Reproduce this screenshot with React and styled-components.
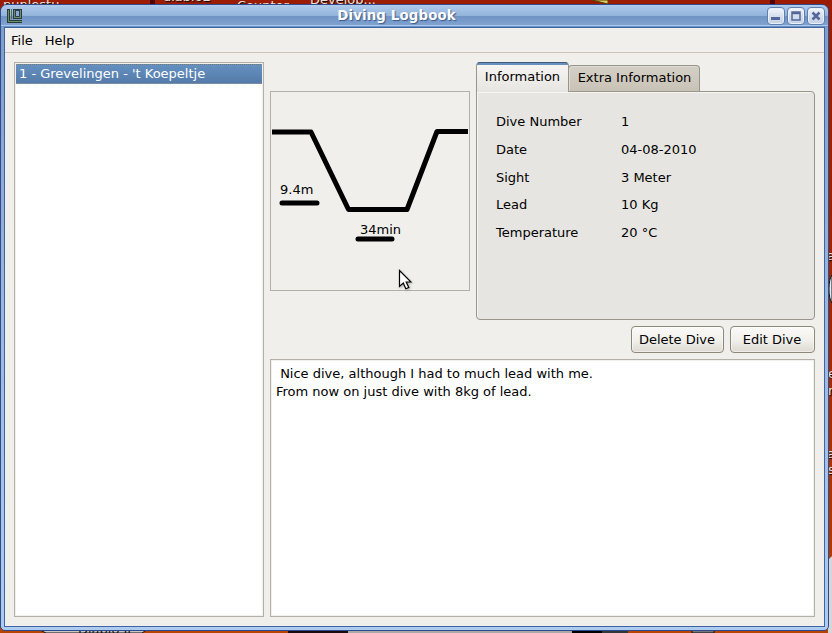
import React from "react";
import styled, { createGlobalStyle } from "styled-components";

const Global = createGlobalStyle`
  *{box-sizing:border-box}
  html,body{margin:0;padding:0}
  body{width:832px;height:633px;overflow:hidden;font-family:"DejaVu Sans",sans-serif;font-size:13px;color:#000;cursor:default}
`;
const Desktop = styled.div`
  position:relative;width:832px;height:633px;overflow:hidden;
  padding:4px 3px 2px 0;background:linear-gradient(#9b1c00,#a32800 55%,#b84200);
`;
const Wallpaper = styled.svg`position:absolute;left:0;top:0;`;
const DeskLabel = styled.span`
  position:absolute;left:${p => p.$x}px;top:${p => p.$y}px;font-size:13px;line-height:16px;
  white-space:nowrap;color:${p => p.$dark ? "#111" : "#e6e0dc"};text-shadow:${p => p.$dark ? "none" : "1px 1px 1px #000"};
`;
const Window = styled.div`
  position:relative;width:829px;height:627px;display:flex;flex-direction:column;
  border:1px solid #2f4b8c;border-radius:7px 7px 5px 5px;
  background:linear-gradient(#7b9dca,#9ab7de 300px,#aecbf0);
  padding:0 3px 3px;
`;
const TitleBar = styled.header`
  height:22px;flex:none;display:flex;align-items:center;margin:0 -3px;padding:0 3px 0 6px;
  border-radius:6px 6px 0 0;
  background:linear-gradient(#b3cdef 0,#a9c6e9 2px,#92b2da 11px,#6f93c2 11px,#7fa2d0 20px,#a9c8ee 20px,#a9c8ee 21px,#6d92c4 21px);
`;
const Title = styled.h1`
  flex:1;margin:0;padding:0 0 1px;text-align:center;font-size:13.330px;line-height:20px;font-weight:bold;
  letter-spacing:.15px;text-indent:3px;
  color:#fff;text-shadow:1px 1px 1px #3c5a88;
`;
const Controls = styled.div`display:flex;gap:2px;`;
const Control = styled.button`
  width:18px;height:18px;padding:0;border:1px solid #5f7fb0;border-radius:4px;display:grid;place-items:center;
  background:linear-gradient(#f4f7fb,#d6dfed 50%,#c3d0e4);box-shadow:inset 0 0 0 1px #e9f0fa;
`;
const Client = styled.main`
  flex:1;display:flex;flex-direction:column;border:1px solid #3f64a3;background:#f0efeb;
`;
const MenuBar = styled.nav`
  height:25px;flex:none;display:flex;gap:12px;padding:0 6px;align-items:center;border-bottom:1px solid #cfc3b8;
`;
const Content = styled.div`flex:1;display:flex;gap:6px;padding:9px 9px 9px;`;
const Frame = styled.section`background:#fff;border:1px solid #b2b0a9;box-shadow:inset 0 0 0 1px #f1f0ed;`;
const DiveList = styled(Frame)`width:250px;padding:1px;`;
const DiveItem = styled.div`
  height:20px;padding:0 3px;color:#fff;border:1px dotted #8b8b86;border-width:1px 0;
  background:linear-gradient(#6390c0,#557ba9);line-height:18px;
`;
const Details = styled.div`flex:1;display:flex;flex-direction:column;`;
const Summary = styled.div`display:flex;gap:6px;height:258px;`;
const Profile = styled.figure`
  position:relative;width:200px;height:200px;margin:29px 0 0;border:1px solid #b2b0a9;
`;
const ProfileLabel = styled.figcaption`
  position:absolute;left:${p => p.$x}px;top:${p => p.$y}px;line-height:16px;
`;
const Notebook = styled.div`flex:1;display:flex;flex-direction:column;`;
const Tabs = styled.div`display:flex;align-items:flex-end;height:29px;`;
const Tab = styled.button`
  font:inherit;color:#000;border:1px solid #98958a;border-radius:4px 4px 0 0;white-space:nowrap;
  width:${p => p.$active ? 93 : 132}px;height:${p => p.$active ? 30 : 26}px;
  padding:${p => p.$active ? "0 0 2px" : "0 0 2px 1px"};
  margin:${p => p.$active ? "0 0 -1px" : "0 0 0 -1px"};
  border-bottom:0;position:relative;z-index:${p => p.$active ? 1 : 0};
  background:${p => p.$active ? "linear-gradient(#6690bd 2px,#f5f4f2 2px,#e6e5e1)" : "linear-gradient(#d5d0c7,#c8c2b6)"};
  border-top-color:${p => p.$active ? "#405b78" : "#98958a"};
  box-shadow:${p => p.$active ? "none" : "inset 1px 1px #dedad2"};
`;
const Panel = styled.div`
  height:229px;padding:15px 19px;border:1px solid #98958a;border-radius:0 4px 4px 4px;background:#e6e5e1;
  box-shadow:inset 1px 1px #f6f5f3;display:grid;grid-template-columns:125px 1fr;
  grid-template-rows:28px 28px 28px 27px 28px;
  align-content:start;align-items:center;
`;
const Actions = styled.div`display:flex;justify-content:flex-end;gap:6px;padding:6px 0;height:39px;`;
const Button = styled.button`
  font:inherit;color:#000;width:${p => p.$w}px;height:27px;padding:0 1px 0 0;border:1px solid #8d8778;border-radius:4px;
  background:linear-gradient(#fbfaf8,#f0efeb 55%,#ddd9d1);box-shadow:inset 0 0 0 1px #ffffff80;
`;
const Notes = styled(Frame)`
  flex:1;padding:5px;line-height:18px;white-space:pre-wrap;
`;
const Pointer = styled.svg`position:absolute;left:398px;top:269px;filter:drop-shadow(1px 1px 1px #0004);`;

const FACTS = [
  ["Dive Number", "1"],
  ["Date", "04-08-2010"],
  ["Sight", "3 Meter"],
  ["Lead", "10 Kg"],
  ["Temperature", "20 °C"],
];

function BookIcon() {
  return (
    <svg width="16" height="16" viewBox="0 0 16 16" shapeRendering="crispEdges">
      <path d="M0 1h3v11h12v3H0z" fill="#2b3d38" />
      <path d="M1 2h1v11h13v1H1z" fill="#6f8f63" />
      <path d="M4 1h1v10H4z" fill="#4f6f56" />
      <path d="M6 1h9v10H6z" fill="#2b3d38" />
      <path d="M7 2h7v8H7z" fill="#6f8f63" />
      <path d="M8 2h5v7H8z" fill="#2b3d58" />
      <path d="M9 3h3v5H9z" fill="#8aa9d2" />
    </svg>
  );
}

export default function App() {
  return (
    <Desktop>
      <Global />
      <Wallpaper width="832" height="633">
        <path d="M150 0h5v6h-5zM770 0h5v6h-5z" fill="#500006" />
        <path d="M592 0h16v4z" fill="#e0cf60" stroke="#54400a" />
        <path d="M38 629h110l-6 4H46z" fill="#c9c9ca" stroke="#111" />
        <path d="M288 629h60v4h-60z" fill="#1a0a10" />
        <path d="M348 629h226v4H348z" fill="#a9a9aa" />
        <path d="M572 629h30v4h-30z" fill="#000" />
        <path d="M602 629h26v4h-26z" fill="#32383a" />
        <path d="M692 629h22v4h-22z" fill="#777" stroke="#111" />
        <path d="M832 556l-4 4v73h4z" fill="#d6d5d8" />
        <path d="M832 275c-4 4-4 24 0 28z" fill="#e8e8ee" stroke="#111" />
      </Wallpaper>
      <DeskLabel $x={3} $y={-3}>nunlestu</DeskLabel>
      <DeskLabel $x={163} $y={-11}>diablo2</DeskLabel>
      <DeskLabel $x={237} $y={-2}>Counter</DeskLabel>
      <DeskLabel $x={310} $y={-8}>Develop...</DeskLabel>
      <DeskLabel $x={78} $y={622} $dark>Diablo II</DeskLabel>
      <DeskLabel $x={827} $y={248}>a</DeskLabel>
      <DeskLabel $x={828} $y={366}>e</DeskLabel>
      <DeskLabel $x={828} $y={383}>r</DeskLabel>
      <DeskLabel $x={827} $y={446}>a</DeskLabel>
      <DeskLabel $x={828} $y={462}>s</DeskLabel>
      <Window>
        <TitleBar>
          <BookIcon />
          <Title>Diving Logbook</Title>
          <Controls>
            <Control aria-label="Minimize"><svg width="10" height="10"><path d="M0 6h9v3H0z" fill="#55679a" /></svg></Control>
            <Control aria-label="Maximize"><svg width="10" height="10"><path d="M1 1h8v8H1z M1 2.500h8" fill="none" stroke="#55679a" strokeWidth="1.5" /></svg></Control>
            <Control aria-label="Close"><svg width="10" height="10"><path d="M1.500 1.500l7 7m0-7l-7 7" stroke="#55679a" strokeWidth="2.5" /></svg></Control>
          </Controls>
        </TitleBar>
        <Client>
          <MenuBar><span>File</span><span>Help</span></MenuBar>
          <Content>
            <DiveList><DiveItem>1 - Grevelingen - 't Koepeltje</DiveItem></DiveList>
            <Details>
              <Summary>
                <Profile>
                  <svg width="198" height="198" fill="none" stroke="#000" strokeWidth="5">
                    <path d="M1 40H40L77.500 117.500H136L166 39.500H197" strokeLinejoin="round" />
                    <path d="M11 111H46M87 147H121" strokeLinecap="round" />
                  </svg>
                  <ProfileLabel as="span" $x={9} $y={90}>9.4m</ProfileLabel>
                  <ProfileLabel as="span" $x={89} $y={130}>34min</ProfileLabel>
                </Profile>
                <Notebook>
                  <Tabs><Tab $active>Information</Tab><Tab>Extra Information</Tab></Tabs>
                  <Panel>
                    {FACTS.map(([k, v]) => (
                      <React.Fragment key={k}><span>{k}</span><span>{v}</span></React.Fragment>
                    ))}
                  </Panel>
                </Notebook>
              </Summary>
              <Actions><Button $w={93}>Delete Dive</Button><Button $w={85}>Edit Dive</Button></Actions>
              <Notes>{" Nice dive, although I had to much lead with me.\nFrom now on just dive with 8kg of lead."}</Notes>
            </Details>
          </Content>
        </Client>
      </Window>
      <Pointer width="14" height="22">
        <path d="M1.500 1.500v16l3.800-3.500 2.500 5.800 3-1.300-2.600-5.500H13z" fill="#fff" stroke="#000" strokeWidth="1.200" />
      </Pointer>
    </Desktop>
  );
}
